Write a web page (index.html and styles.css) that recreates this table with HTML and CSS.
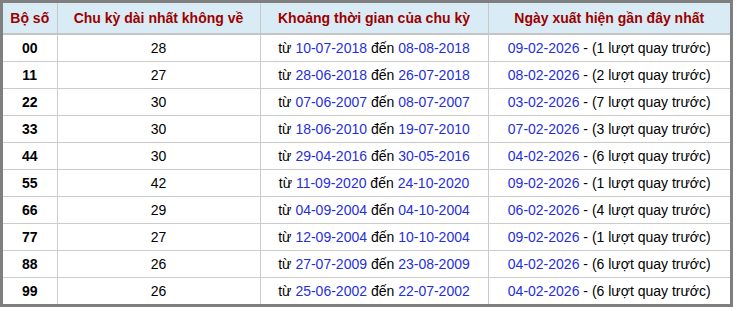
FILE: index.html
```html
<!DOCTYPE html>
<html lang="vi">
<head>
<meta charset="utf-8">
<link rel="stylesheet" href="styles.css">
</head>
<body>
<div class="frame">
<table class="tbl">
<colgroup><col class="c1"><col class="c2"><col class="c3"><col class="c4"></colgroup>
<thead>
<tr><th>Bộ số</th><th>Chu kỳ dài nhất không về</th><th>Khoảng thời gian của chu kỳ</th><th>Ngày xuất hiện gần đây nhất</th></tr>
</thead>
<tbody>
<tr><td class="num">00</td><td>28</td><td>từ <span class="d">10-07-2018</span> đến <span class="d">08-08-2018</span></td><td><span class="d">09-02-2026</span> - (1 lượt quay trước)</td></tr>
<tr><td class="num">11</td><td>27</td><td>từ <span class="d">28-06-2018</span> đến <span class="d">26-07-2018</span></td><td><span class="d">08-02-2026</span> - (2 lượt quay trước)</td></tr>
<tr><td class="num">22</td><td>30</td><td>từ <span class="d">07-06-2007</span> đến <span class="d">08-07-2007</span></td><td><span class="d">03-02-2026</span> - (7 lượt quay trước)</td></tr>
<tr><td class="num">33</td><td>30</td><td>từ <span class="d">18-06-2010</span> đến <span class="d">19-07-2010</span></td><td><span class="d">07-02-2026</span> - (3 lượt quay trước)</td></tr>
<tr><td class="num">44</td><td>30</td><td>từ <span class="d">29-04-2016</span> đến <span class="d">30-05-2016</span></td><td><span class="d">04-02-2026</span> - (6 lượt quay trước)</td></tr>
<tr><td class="num">55</td><td>42</td><td>từ <span class="d">11-09-2020</span> đến <span class="d">24-10-2020</span></td><td><span class="d">09-02-2026</span> - (1 lượt quay trước)</td></tr>
<tr><td class="num">66</td><td>29</td><td>từ <span class="d">04-09-2004</span> đến <span class="d">04-10-2004</span></td><td><span class="d">06-02-2026</span> - (4 lượt quay trước)</td></tr>
<tr><td class="num">77</td><td>27</td><td>từ <span class="d">12-09-2004</span> đến <span class="d">10-10-2004</span></td><td><span class="d">09-02-2026</span> - (1 lượt quay trước)</td></tr>
<tr><td class="num">88</td><td>26</td><td>từ <span class="d">27-07-2009</span> đến <span class="d">23-08-2009</span></td><td><span class="d">04-02-2026</span> - (6 lượt quay trước)</td></tr>
<tr><td class="num">99</td><td>26</td><td>từ <span class="d">25-06-2002</span> đến <span class="d">22-07-2002</span></td><td><span class="d">04-02-2026</span> - (6 lượt quay trước)</td></tr>
</tbody>
</table>
</div>
</body>
</html>
```
FILE: styles.css
```css
html, body {
  margin: 0;
  padding: 0;
  background: #fff;
}
.frame {
  width: 727px;
  border: 3px solid #7f7f7f;
  font-family: "Liberation Sans", Arial, sans-serif;
  font-size: 14px;
  color: #000;
}
.tbl {
  width: 727px;
  border-collapse: collapse;
  table-layout: fixed;
}
.c1 { width: 54px; }
.c2 { width: 203px; }
.c3 { width: 228px; }
.c4 { width: 242px; }
.tbl th {
  height: 30px;
  padding: 0;
  background: #d9ecf5;
  color: #9c0000;
  font-weight: bold;
  text-align: center;
  border-left: 1px solid #c8c8c8;
  border-bottom: 2px solid #c4c4c4;
}
.tbl td {
  height: 26px;
  padding: 0;
  text-align: center;
  border-left: 1px solid #cccccc;
  border-top: 1px solid #cccccc;
}
.tbl th:first-child, .tbl td:first-child { border-left: none; }
.tbl tbody tr:first-child td { border-top: none; }
.num { font-weight: bold; }
.d { color: #1f2fe0; }
```
